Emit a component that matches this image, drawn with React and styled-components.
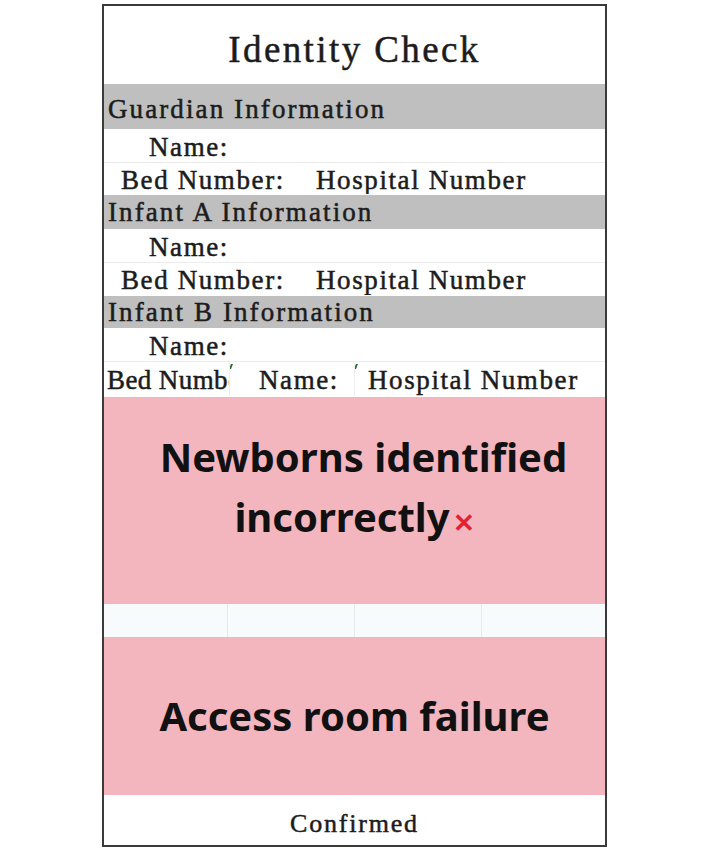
import { createGlobalStyle, styled } from "styled-components";

const GlobalStyle = createGlobalStyle`
    html, body {
        margin:0;
        background:#ffffff;
    }
`

const Page = styled.div`
    padding:4px 0 0 102px;
`

const Frame = styled.div`
    width:501px;
    border:2px solid #3a3a3a;
    display:flex;
    flex-direction:column;
    font-family:"Liberation Serif", "Times New Roman", serif;
    color:#1c1c1c;
    -webkit-text-stroke:0.5px #1c1c1c;
`

const Title = styled.div`
    height:78px;
    display:flex;
    align-items:center;
    justify-content:center;
    font-size:37px;
    letter-spacing:2.4px;
    padding-top:8px;
    box-sizing:border-box;
`

const SectionHead = styled.div`
    height:${p => p.$h}px;
    background:#bfbfbf;
    display:flex;
    align-items:${p => p.$bottom ? "flex-end" : "center"};
    padding:0 0 ${p => p.$bottom ? 4 : 0}px 4px;
    box-sizing:border-box;
    font-size:27px;
    letter-spacing:2.1px;
`

const Row = styled.div`
    height:${p => p.$h}px;
    display:flex;
    align-items:center;
    border-bottom:1px solid ${p => p.$line ? "#ececec" : "transparent"};
    box-sizing:border-box;
    font-size:27px;
    letter-spacing:1.6px;
`

const Cell = styled.div`
    width:${p => p.$w ? p.$w + "px" : "auto"};
    flex:${p => p.$w ? "none" : 1};
    height:100%;
    display:flex;
    align-items:center;
    padding-left:${p => p.$pad}px;
    padding-top:3px;
    box-sizing:border-box;
    overflow:hidden;
    white-space:nowrap;
    position:relative;
    letter-spacing:${p => p.$tight ? "0.4px" : "inherit"};
    border-right:1px solid ${p => p.$divider ? "#eeeeee" : "transparent"};
`

const Mark = styled.span`
    position:absolute;
    top:2px;
    left:0;
    width:2px;
    height:5px;
    background:#2f6b2f;
    transform:skewX(-20deg);
`

const Alert = styled.div`
    height:${p => p.$h}px;
    background:#f3b5be;
    display:flex;
    flex-direction:column;
    align-items:center;
    justify-content:center;
    font-family:"Noto Sans", "Open Sans", sans-serif;
    font-weight:700;
    font-size:40px;
    line-height:60px;
    color:#111111;
    -webkit-text-stroke:0;
    letter-spacing:0;
    text-align:center;
    padding-bottom:${p => p.$lift || 0}px;
    box-sizing:border-box;
`

const AlertLine = styled.div`
    padding-left:${p => p.$indent || 0}px;
`

const Cross = styled.span`
    color:#e5212b;
    font-size:26px;
    margin-left:3px;
`

const Strip = styled.div`
    height:33px;
    display:grid;
    grid-template-columns:124px 127px 127px 1fr;
    background:#f8fbfb;
`

const StripCell = styled.div`
    border-right:1px solid ${p => p.$last ? "transparent" : "#e6eaea"};
`

const Footer = styled.div`
    height:50px;
    display:flex;
    align-items:center;
    justify-content:center;
    font-size:26px;
    letter-spacing:1.8px;
    padding-top:8px;
    box-sizing:border-box;
`

const NameRow = () => (
    <Row $h={34} $line>
        <Cell $pad={45}>Name:</Cell>
    </Row>
)

const BedRow = ({ h }) => (
    <Row $h={h}>
        <Cell $w={212} $pad={17}>Bed Number:</Cell>
        <Cell $pad={0}>Hospital Number</Cell>
    </Row>
)

const App = () => {
    return (
        <Page>
            <GlobalStyle />
            <Frame>
                <Title>Identity Check</Title>

                <SectionHead $h={45} $bottom>Guardian Information</SectionHead>
                <NameRow />
                <BedRow h={32} />

                <SectionHead $h={34}>Infant A Information</SectionHead>
                <NameRow />
                <BedRow h={33} />

                <SectionHead $h={32}>Infant B Information</SectionHead>
                <NameRow />
                <Row $h={35}>
                    <Cell $w={126} $pad={3} $divider $tight>Bed Number:</Cell>
                    <Cell $w={125} $pad={29} $divider>
                        <Mark />
                        Name:
                    </Cell>
                    <Cell $pad={13}>
                        <Mark />
                        Hospital Number
                    </Cell>
                </Row>

                <Alert $h={207} $lift={22}>
                    <AlertLine $indent={18}>Newborns identified</AlertLine>
                    <AlertLine>incorrectly<Cross>✕</Cross></AlertLine>
                </Alert>

                <Strip>
                    <StripCell />
                    <StripCell />
                    <StripCell />
                    <StripCell $last />
                </Strip>

                <Alert $h={158}>Access room failure</Alert>

                <Footer>Confirmed</Footer>
            </Frame>
        </Page>
    )
}

export default App;
